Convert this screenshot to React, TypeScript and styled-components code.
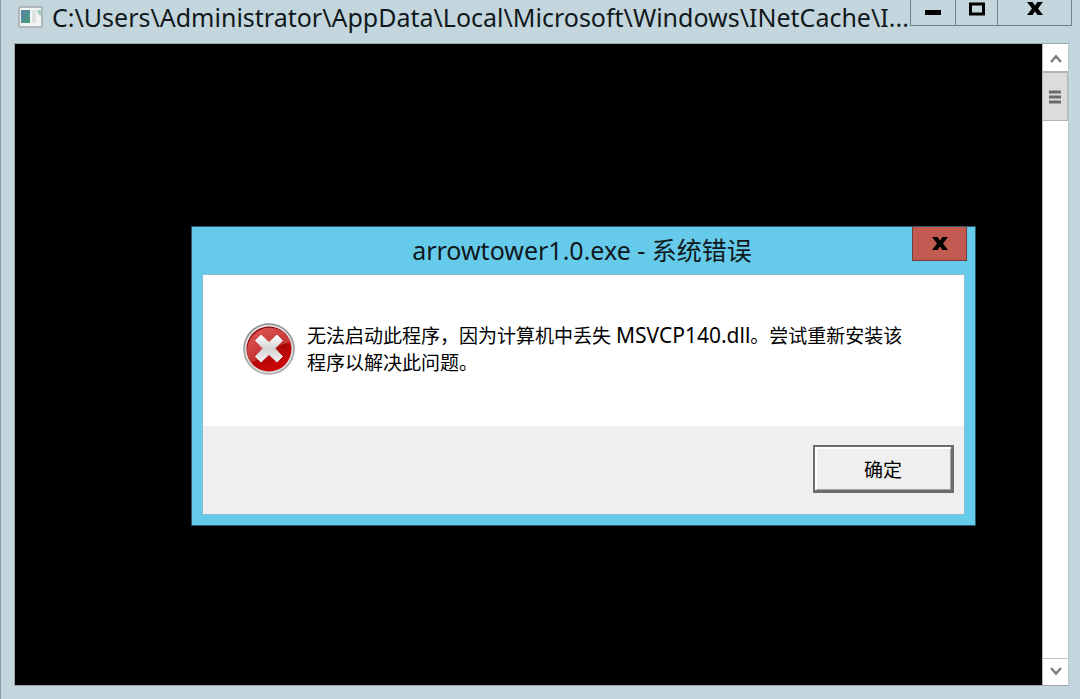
import React from "react";
import styled, { createGlobalStyle } from "styled-components";

const GlobalStyle = createGlobalStyle`
  *, *::before, *::after { box-sizing: border-box; }
  body {
    margin: 0;
    background: #c4d6dd;
    color: #10181c;
    font-family: "Noto Sans", "Noto Sans CJK SC", sans-serif;
  }
  button { margin: 0; padding: 0; font-family: inherit; color: inherit; border-radius: 0; }
  h1, h2, p { margin: 0; font-weight: 400; }
`;

const ConsoleWindow = styled.main`
  position: relative;
  display: flex;
  flex-direction: column;
  min-height: 100vh;
  padding: 0 11px 13px 13px;
  border-left: 1px solid #8e9ba5;
  background: #c4d6dd;
`;

const TitleBar = styled.header`
  display: flex;
  align-items: flex-start;
  height: 43px;
  padding-left: 4px;
  margin-right: -3px;
`;

const AppIcon = styled.svg`
  flex: none;
  width: 25px;
  height: 22px;
  margin: 6px 9px 0 0;
`;

const WindowTitle = styled.h1`
  flex: 1;
  min-width: 0;
  overflow: hidden;
  white-space: nowrap;
  font-size: 25px;
  line-height: 34px;
`;

const WindowControls = styled.div`
  display: flex;
  flex: none;
  height: 26px;
  border: solid #71808a;
  border-width: 0 1px 1px;
`;

const WindowButton = styled.button<{ $width: number }>`
  display: flex;
  justify-content: center;
  width: ${(p) => p.$width}px;
  border: 0;
  background: transparent;

  & + & { border-left: 1px solid #71808a; }
`;

const Frame = styled.section`
  display: flex;
  flex: 1;
  border: 1px solid #9aa7ad;
  border-right-color: #c0c6c9;
`;

const Screen = styled.div`
  flex: 1;
  background: #000;
`;

const Scrollbar = styled.div`
  display: flex;
  flex-direction: column;
  width: 26px;
  border-left: 1px solid #b5b5b5;
  background: #fff;
`;

const ScrollButton = styled.button<{ $end?: boolean }>`
  display: grid;
  place-items: center;
  height: 27px;
  border: 0 solid #c2c2c2;
  border-top-width: ${(p) => (p.$end ? 1 : 0)}px;
  margin-top: ${(p) => (p.$end ? "auto" : 0)};
  background: #fff;
`;

const ScrollThumb = styled.div`
  display: grid;
  place-items: center;
  height: 50px;
  border: solid #b4b4b4;
  border-width: 2px 1px 1px 0;
  background: #dcdcdc;
`;

const Dialog = styled.div`
  position: absolute;
  top: 226px;
  left: 190px;
  width: 785px;
  padding: 0 10px 10px;
  border: 1px solid #2b5565;
  background: #66caea;
`;

const DialogHeader = styled.div`
  display: flex;
  height: 47px;
`;

const DialogTitle = styled.h2`
  flex: 1;
  padding-left: 50px;
  text-align: center;
  font-size: 25px;
  line-height: 46px;
`;

const DialogClose = styled.button`
  display: grid;
  place-items: center;
  width: 55px;
  height: 34px;
  margin-right: -2px;
  border: 1px solid #733e3b;
  border-top: 0;
  background: #c35a51;
`;

const DialogPanel = styled.div`
  border: 1px solid #8bbdd0;
`;

const DialogMessage = styled.div`
  display: flex;
  gap: 12px;
  height: 151px;
  padding: 48px 40px 0;
  background: #fff;
`;

const ErrorIcon = styled.svg`
  flex: none;
  width: 52px;
  height: 52px;
`;

const MessageText = styled.p`
  color: #000;
  font-size: 19px;
  line-height: 27px;
`;

const FileName = styled.span`
  font-size: 21px;
  line-height: 1;
`;

const DialogActions = styled.div`
  display: flex;
  justify-content: flex-end;
  height: 88px;
  padding: 19px 10px 0;
  background: #efefef;
`;

const OkButton = styled.button`
  width: 141px;
  height: 48px;
  border: solid #6c6c6c;
  border-width: 2px 3px 3px 2px;
  background: #efefef;
  box-shadow: inset 2px 2px 0 #fff, inset -1px -1px 0 #a5a5a5;
  font-size: 19px;
  color: #000;
`;

const Cross = () => (
  <path d="M0 0h5.500l2.500 3.500L10.500 0H16l-5 6.500 5 6.500h-5.500L8 9.500 5.500 13H0l5-6.500z" fill="#000" />
);

export default function App() {
  return (
    <>
      <GlobalStyle />
      <ConsoleWindow lang="zh-CN">
        <TitleBar>
          <AppIcon viewBox="0 0 25 22" aria-hidden="true">
            <defs>
              <linearGradient id="pane" x1="0" y1="0" x2="1" y2="1">
                <stop offset="0" stopColor="#5d83a9" />
                <stop offset="1" stopColor="#479b75" />
              </linearGradient>
            </defs>
            <rect x="1" y="1" width="23" height="20" rx="1" fill="#f3f5f5" stroke="#aeb7bc" strokeWidth="2" />
            <rect x="3" y="4" width="9" height="13" fill="url(#pane)" />
            <rect x="14" y="4" width="4" height="13" fill="#e0e2e2" />
            <path d="M19 4h4v6l-3-2z" fill="#a6cfb9" />
          </AppIcon>
          <WindowTitle>
            {"C:\\Users\\Administrator\\AppData\\Local\\Microsoft\\Windows\\INetCache\\I..."}
          </WindowTitle>
          <WindowControls>
            <WindowButton $width={44} aria-label="最小化">
              <svg width="16" height="20" aria-hidden="true">
                <rect y="10" width="16" height="5" fill="#000" />
              </svg>
            </WindowButton>
            <WindowButton $width={42} aria-label="最大化">
              <svg width="16" height="20" aria-hidden="true">
                <rect x="1.5" y="4" width="13" height="10" fill="none" stroke="#000" strokeWidth="3" />
              </svg>
            </WindowButton>
            <WindowButton $width={74} aria-label="关闭">
              <svg width="16" height="20" aria-hidden="true">
                <g transform="translate(0 2)"><Cross /></g>
              </svg>
            </WindowButton>
          </WindowControls>
        </TitleBar>

        <Frame aria-label="控制台">
          <Screen />
          <Scrollbar>
            <ScrollButton aria-label="向上滚动">
              <svg width="14" height="10" viewBox="0 0 14 10" aria-hidden="true">
                <path d="M2 9l5-5.500L12 9" fill="none" stroke="#808080" strokeWidth="2.6" />
              </svg>
            </ScrollButton>
            <ScrollThumb>
              <svg width="12" height="14" aria-hidden="true">
                <path d="M0 2h12M0 7h12M0 12h12" stroke="#6b6b6b" strokeWidth="3" />
              </svg>
            </ScrollThumb>
            <ScrollButton $end aria-label="向下滚动">
              <svg width="14" height="10" viewBox="0 0 14 10" aria-hidden="true">
                <path d="M2 1l5 5.500L12 1" fill="none" stroke="#808080" strokeWidth="2.6" />
              </svg>
            </ScrollButton>
          </Scrollbar>
        </Frame>

        <Dialog role="alertdialog" aria-labelledby="error-title" aria-describedby="error-text">
          <DialogHeader>
            <DialogTitle id="error-title">arrowtower1.0.exe - 系统错误</DialogTitle>
            <DialogClose aria-label="关闭">
              <svg width="16" height="13" aria-hidden="true"><Cross /></svg>
            </DialogClose>
          </DialogHeader>
          <DialogPanel>
            <DialogMessage>
              <ErrorIcon viewBox="0 0 52 52" aria-hidden="true">
                <defs>
                  <linearGradient id="rim" x1="0" y1="0" x2="0" y2="1">
                    <stop offset="0" stopColor="#8d8d8d" />
                    <stop offset="1" stopColor="#b0b0b0" />
                  </linearGradient>
                  <linearGradient id="gloss" x1="0" y1="0" x2="0.6" y2="1">
                    <stop offset="0" stopColor="#e05c5c" />
                    <stop offset="1" stopColor="#bd2626" />
                  </linearGradient>
                  <linearGradient id="base" x1="0.3" y1="0.3" x2="0.6" y2="1">
                    <stop offset="0" stopColor="#960808" />
                    <stop offset="1" stopColor="#cf0606" />
                  </linearGradient>
                  <linearGradient id="mark" x1="0" y1="0" x2="0" y2="1">
                    <stop offset="0" stopColor="#ffffff" />
                    <stop offset="0.5" stopColor="#d4d4d4" />
                    <stop offset="1" stopColor="#f2f2f2" />
                  </linearGradient>
                </defs>
                <circle cx="26" cy="26" r="25" fill="#dedede" stroke="url(#rim)" strokeWidth="1.6" />
                <circle cx="26" cy="26" r="22.5" fill="url(#base)" />
                <path d="M7.500 39A22.500 22.500 0 1 1 48 20C37 20 30 25 23 31S12 38 7.500 39z" fill="url(#gloss)" />
                <path
                  d="M18 12l8 7.500 8-7.500 5.500 5.500-7.500 8 7.500 8-5.500 5.500-8-7.500-8 7.500-5.500-5.500 7.500-8-7.500-8z"
                  fill="url(#mark)"
                  stroke="url(#mark)"
                  strokeLinejoin="round"
                />
              </ErrorIcon>
              <MessageText id="error-text">
                无法启动此程序，因为计算机中丢失 <FileName>MSVCP140.dll</FileName>。尝试重新安装该
                <br />
                程序以解决此问题。
              </MessageText>
            </DialogMessage>
            <DialogActions>
              <OkButton>确定</OkButton>
            </DialogActions>
          </DialogPanel>
        </Dialog>
      </ConsoleWindow>
    </>
  );
}
